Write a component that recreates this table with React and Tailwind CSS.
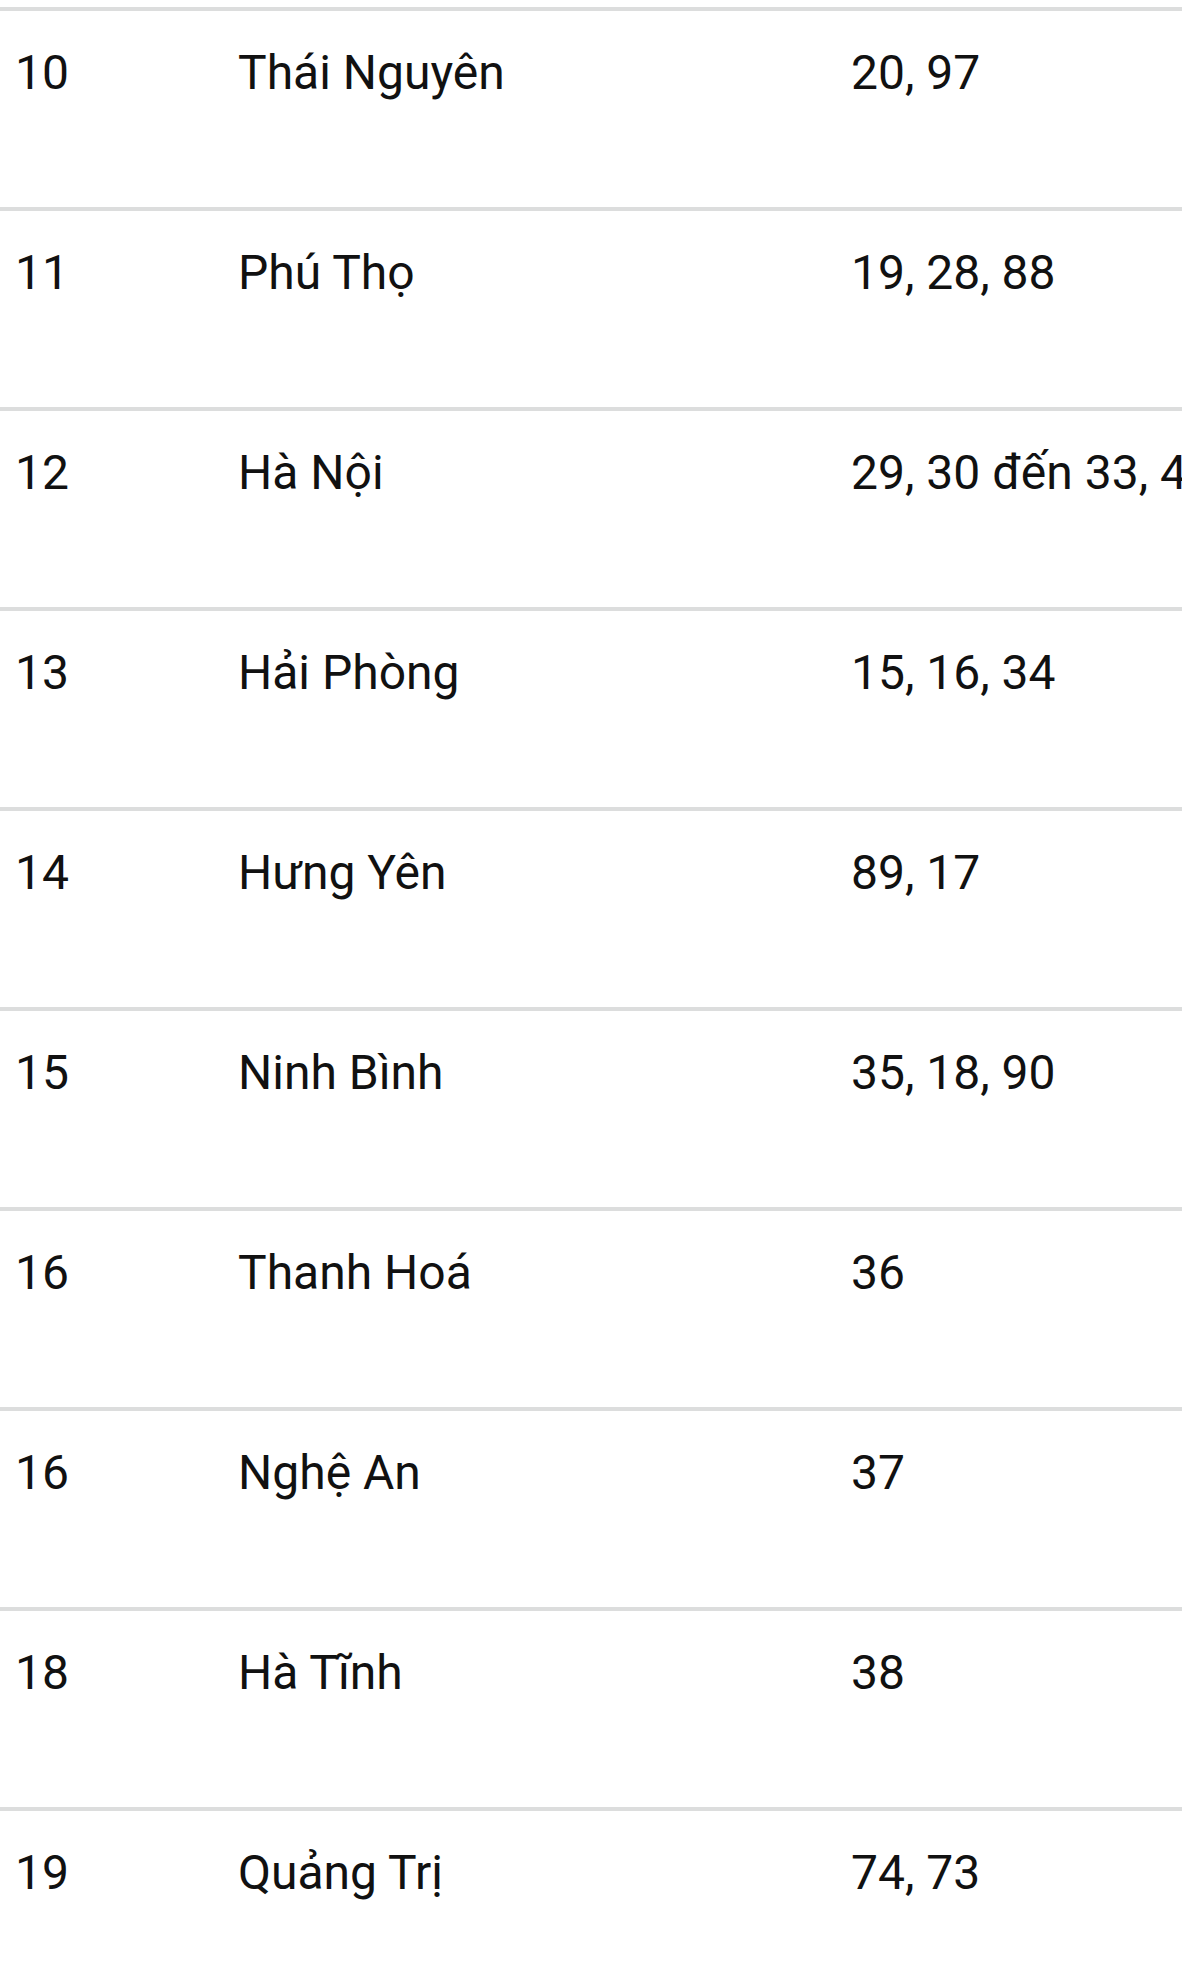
import React from "react";

const rows = [
  ["10", "Thái Nguyên", "20, 97"],
  ["11", "Phú Thọ", "19, 28, 88"],
  ["12", "Hà Nội", "29, 30 đến 33, 40"],
  ["13", "Hải Phòng", "15, 16, 34"],
  ["14", "Hưng Yên", "89, 17"],
  ["15", "Ninh Bình", "35, 18, 90"],
  ["16", "Thanh Hoá", "36"],
  ["16", "Nghệ An", "37"],
  ["18", "Hà Tĩnh", "38"],
  ["19", "Quảng Trị", "74, 73"],
];

export default function App() {
  return (
    <div
      className="w-[1182px] h-[1968px] overflow-hidden bg-white pt-[7px] text-[#111111]"
      style={{ fontFamily: "Roboto, 'Noto Sans', sans-serif" }}
    >
      {rows.map((r, i) => (
        <div
          key={i}
          className="grid grid-cols-[223px_613px_1fr] pl-[15px] h-[200px] border-t-[4px] border-[#dcdddd] pt-[34px] text-[48px] leading-[56px]"
        >
          <div className="whitespace-nowrap">{r[0]}</div>
          <div className="whitespace-nowrap">{r[1]}</div>
          <div className="whitespace-nowrap overflow-hidden">{r[2]}</div>
        </div>
      ))}
    </div>
  );
}
